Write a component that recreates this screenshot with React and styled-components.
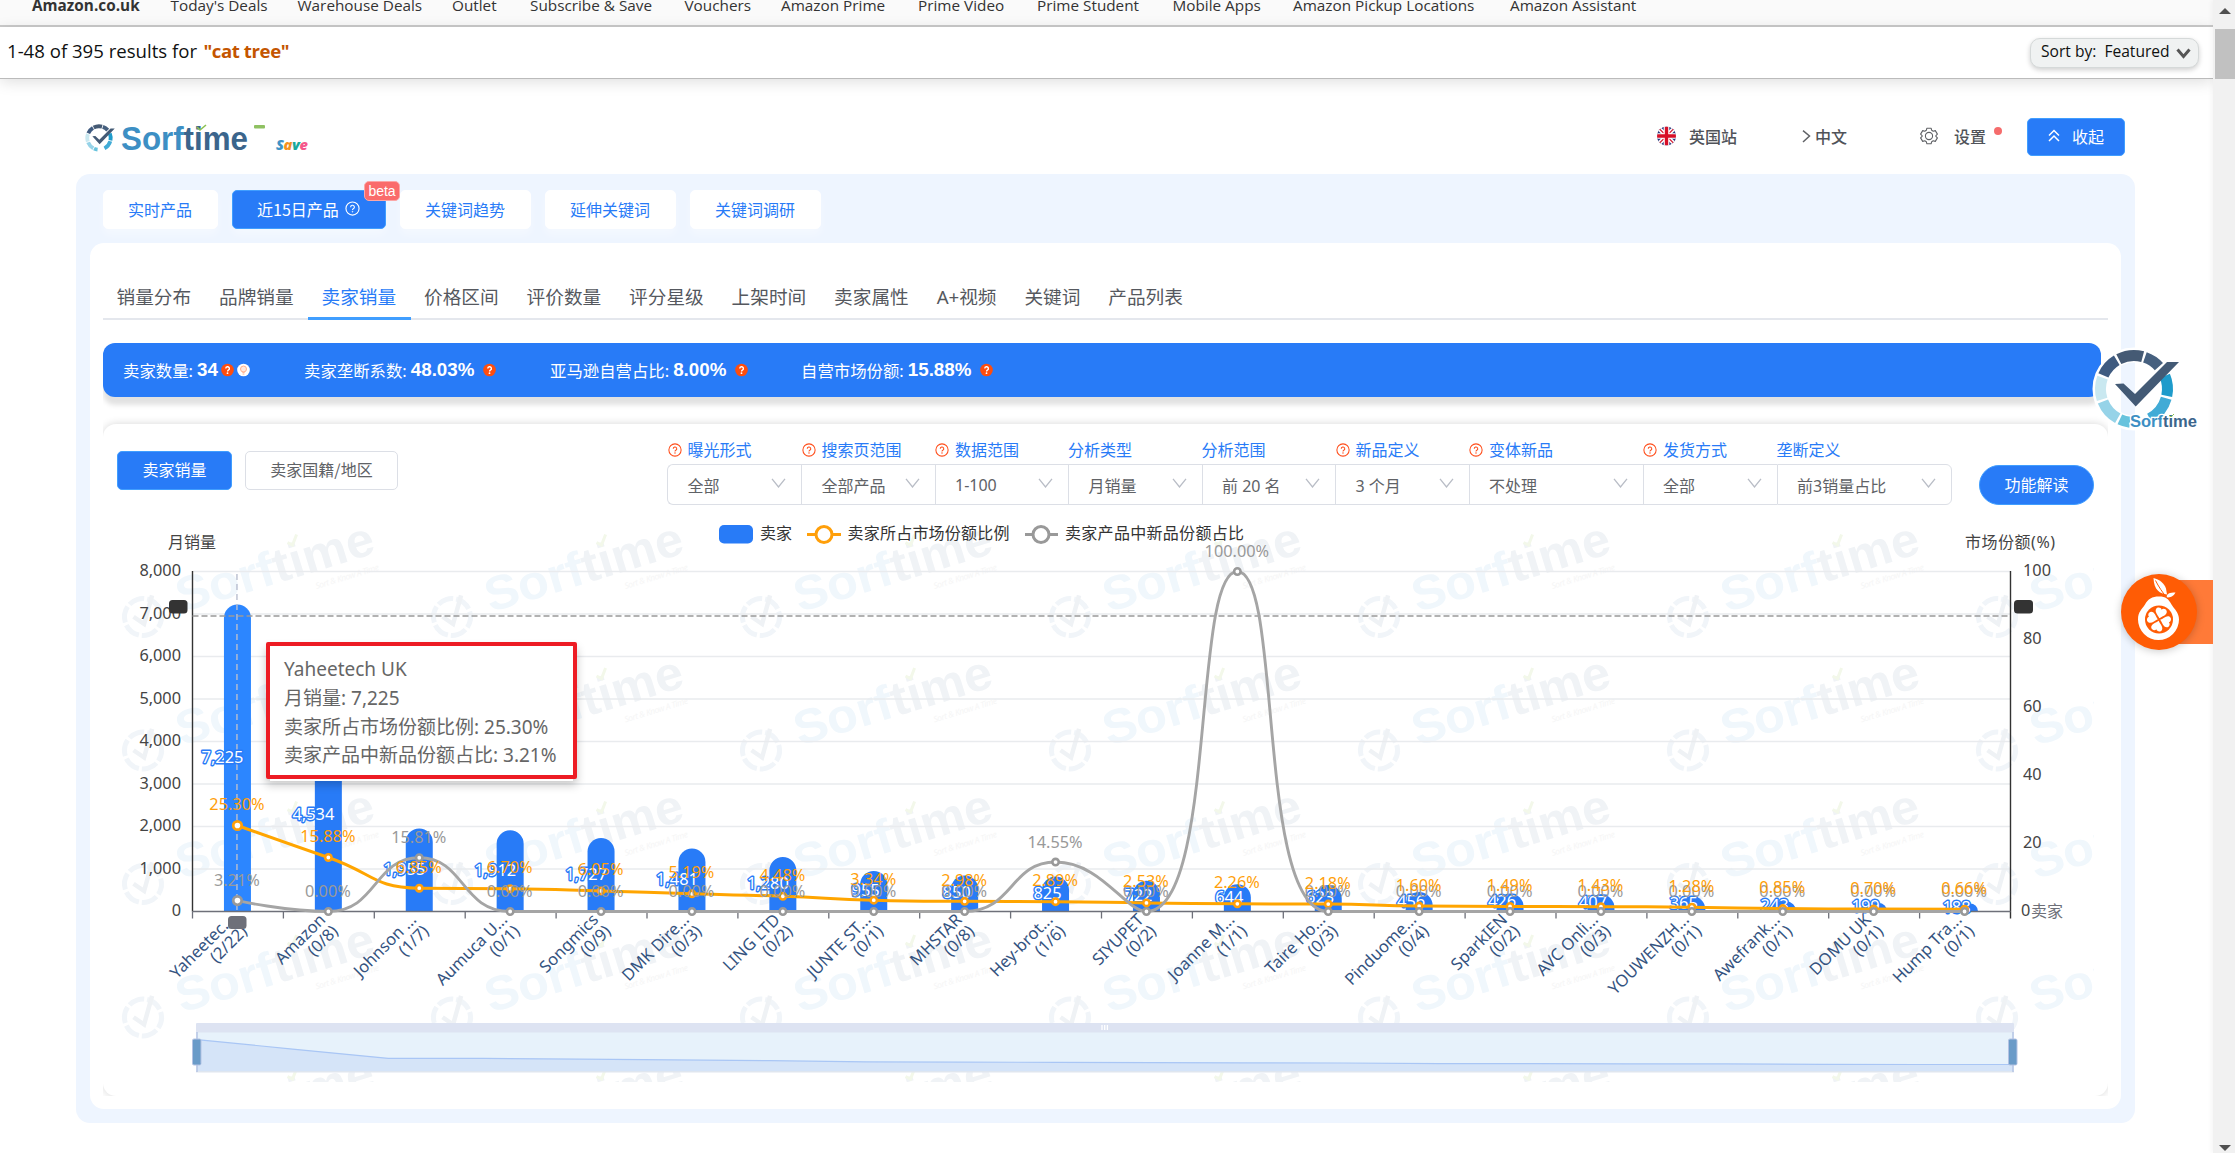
import React from "react";
import styled, { createGlobalStyle, css } from "styled-components";

const BLUE = "#287bf7";
const ORANGE = "#ffa500";

const GlobalStyle = createGlobalStyle`
  * { box-sizing: border-box; }
  body {
    margin: 0;
    background: #fff;
    color: #606266;
    font-family: "Noto Sans", "Noto Sans CJK SC", sans-serif;
    font-size: 16px;
    overflow: hidden;
  }
`;

/* ---------- page frame ---------- */

const Page = styled.div`
  position: relative;
  display: grid;
  grid-template-columns: 2213px 22px;
  width: 2235px;
  height: 1153px;
  overflow: hidden;
`;

const Main = styled.main`
  display: flex;
  flex-direction: column;
  min-width: 0;
`;

const ScrollTrack = styled.aside`
  display: flex;
  flex-direction: column;
  align-items: center;
  padding: 8px 0 2px 2px;
  background: #f1f1f1;
  box-shadow: -2px 0 4px rgba(0, 0, 0, 0.04);
`;

const Arrow = styled.i`
  border: 6px solid transparent;
  border-top-width: ${(p) => (p.$down ? "6px" : "0")};
  border-bottom-width: ${(p) => (p.$down ? "0" : "6px")};
  ${(p) => (p.$down ? "border-top-color" : "border-bottom-color")}: #505050;
  margin-top: ${(p) => (p.$down ? "auto" : "0")};
`;

const ScrollThumb = styled.div`
  width: 20px;
  height: 50px;
  margin-top: 15px;
  background: #c1c1c1;
`;

/* ---------- store navigation ---------- */

const TopNav = styled.nav`
  display: flex;
  gap: 30px;
  height: 27px;
  padding-left: 32px;
  background: #fafafa;
  border-bottom: 2px solid #cbcbcb;
  overflow: hidden;
`;

const NavItem = styled.a`
  flex: none;
  width: ${(p) => p.$w}px;
  margin-top: -6.5px;
  color: #333;
  font-family: "Open Sans", sans-serif;
  font-size: 15.3px;
  line-height: 22px;
  white-space: nowrap;
  ${(p) =>
    p.$bold &&
    css`
      font-weight: 700;
      letter-spacing: 0.02px;
    `}
`;

const ResultBar = styled.div`
  display: flex;
  flex: none;
  justify-content: space-between;
  height: 52px;
  padding: 11px 14px 0 7px;
  border-bottom: 1px solid #bbb;
  box-shadow: 0 3px 14px rgba(0, 0, 0, 0.13);
`;

const ResultText = styled.div`
  color: #0f1111;
  font-family: "Open Sans", sans-serif;
  font-size: 18.6px;
  line-height: 28px;
  margin-top: -1px;
  white-space: nowrap;
  b {
    color: #c45500;
    font-weight: 700;
    letter-spacing: -0.4px;
    margin-left: 1.5px;
  }
`;

const SortSelect = styled.button`
  display: flex;
  align-items: center;
  gap: 8px;
  width: 169px;
  height: 30px;
  padding: 0 7px 4px 10px;
  border: 1px solid #d5d9d9;
  border-radius: 10px;
  background: #f0f2f2;
  box-shadow: 0 2px 5px rgba(15, 17, 17, 0.2);
  color: #0f1111;
  font-family: "Open Sans", sans-serif;
  font-size: 15.6px;
  white-space: nowrap;
  svg {
    flex: none;
    margin: 4px 0 0 -2px;
  }
`;

/* ---------- plugin header ---------- */

const PluginHeader = styled.header`
  display: flex;
  align-items: center;
  justify-content: space-between;
  height: 95px;
  padding: 21px 88px 0 85px;
`;

const Tools = styled.div`
  display: flex;
  align-items: center;
  height: 38px;
  color: #505359;
  font-family: "Noto Sans CJK SC", sans-serif;
  font-weight: 500;
  svg { flex: none; }
`;

const Tool = styled.div`
  display: flex;
  align-items: center;
  gap: ${(p) => p.$gap}px;
  margin-right: ${(p) => p.$after}px;
  padding-bottom: 2px;
  white-space: nowrap;
`;

const Dot = styled.i`
  align-self: flex-start;
  width: 8px;
  height: 8px;
  margin: 9px 0 0 -8px;
  border-radius: 50%;
  background: #f56c6c;
`;

const PrimaryButton = styled.button`
  display: flex;
  align-items: center;
  justify-content: center;
  gap: ${(p) => p.$gap || 0}px;
  flex: none;
  width: ${(p) => p.$w}px;
  height: ${(p) => p.$h}px;
  padding: 0 0 3px;
  border: 1px solid ${(p) => (p.$plain ? "#dcdfe6" : "#409eff")};
  border-radius: ${(p) => (p.$round ? "20px" : "5px")};
  background: ${(p) => (p.$plain ? "#fff" : BLUE)};
  color: ${(p) => (p.$plain ? "#606266" : "#fff")};
  font-family: "Noto Sans CJK SC", sans-serif;
  font-size: 16px;
  white-space: nowrap;
`;

/* ---------- panels ---------- */

const BluePanel = styled.section`
  display: flex;
  flex-direction: column;
  width: 2059px;
  height: 949px;
  margin-left: 76px;
  padding: 16px 14px 14px;
  border-radius: 14px;
  background: #eef5ff;
`;

const TabRow = styled.div`
  display: flex;
  gap: 14px;
  height: 53px;
  padding-left: 13px;
`;

const Tab = styled.button`
  position: relative;
  display: flex;
  align-items: center;
  justify-content: center;
  gap: 6px;
  width: ${(p) => p.$w}px;
  height: 39px;
  padding: 0 1px 2px 0;
  border: 1px solid ${(p) => (p.$active ? "#409eff" : "#fff")};
  border-radius: 5px;
  background: ${(p) => (p.$active ? BLUE : "#fff")};
  box-shadow: 0 6px 8px rgba(255, 255, 255, 0.35);
  color: ${(p) => (p.$active ? "#fff" : BLUE)};
  font-family: "Noto Sans CJK SC", sans-serif;
  font-size: 16px;
  white-space: nowrap;
`;

const Badge = styled.span`
  position: absolute;
  z-index: 1;
  top: -10px;
  right: -15px;
  width: 36px;
  height: 20px;
  border: 1px solid #fba7a7;
  border-radius: 5px;
  background: #fa6b6b;
  color: #fff;
  font: 14px/18px "Liberation Sans", sans-serif;
  text-align: center;
`;

const WhitePanel = styled.div`
  display: flex;
  flex-direction: column;
  height: 866px;
  padding: 35px 13px 13px;
  border-radius: 14px;
  background: #fff;
`;

const SubTabs = styled.div`
  display: flex;
  width: 2005px;
  height: 42px;
  border-bottom: 2px solid #e4e7ed;
`;

const SubTab = styled.a`
  flex: none;
  height: 42px;
  padding: 0 14.4px 0 13.5px;
  border-bottom: 3px solid ${(p) => (p.$active ? "#409eff" : "transparent")};
  color: ${(p) => (p.$active ? BLUE : "#55585e")};
  font-size: 18.67px;
  line-height: 37px;
  white-space: nowrap;
`;

const StatsBar = styled.div`
  display: flex;
  align-items: center;
  width: 1998px;
  height: 54px;
  margin-top: 23px;
  padding: 0 0 1px 20px;
  border-radius: 12px;
  background: ${BLUE};
  box-shadow: 0 8px 5px #e2e2e2;
  clip-path: inset(0 0 -14px 0);
  color: #fff;
`;

const Stat = styled.div`
  display: flex;
  align-items: center;
  gap: 4px;
  flex: none;
  width: ${(p) => p.$w}px;
  white-space: nowrap;
  font-size: 16.4px;
  b {
    font: 700 18.8px "Liberation Sans", sans-serif;
    margin-right: ${(p) => (p.$tight ? "-1px" : "5px")};
  }
  svg { margin-right: -1px; }
`;

const Card = styled.div`
  display: flex;
  flex-direction: column;
  width: 2005px;
  height: 672px;
  margin-top: 27px;
  padding: 0 14px;
  border-radius: 13px;
  box-shadow: 0 0 9px rgba(0, 0, 0, 0.16);
  clip-path: inset(-8px 0 0 0);
`;

const CardHead = styled.div`
  display: flex;
  align-items: flex-end;
  height: 81px;
`;

const Modes = styled.div`
  display: flex;
  gap: 13px;
  margin: 0 269px 15px 0;
`;

const Filters = styled.div`
  display: flex;
  margin-right: 27px;
`;

const Filter = styled.div`
  display: flex;
  flex-direction: column;
  width: ${(p) => p.$w}px;
`;

const FilterLabel = styled.div`
  display: flex;
  align-items: center;
  gap: 6px;
  height: 26px;
  padding-bottom: 4px;
  color: ${BLUE};
  white-space: nowrap;
  svg { margin: 2px 0 0 0.5px; }
`;

const FilterBox = styled.div`
  display: flex;
  align-items: center;
  justify-content: space-between;
  height: 41px;
  padding: 0 15px 0 19.5px;
  border: 1px solid #dcdfe6;
  border-right-width: ${(p) => (p.$last ? "1px" : "0")};
  border-radius: ${(p) => (p.$first ? "6px 0 0 6px" : p.$last ? "0 6px 6px 0" : "0")};
  color: #606266;
  white-space: nowrap;
  svg { margin-top: -3px; }
`;

/* ---------- icons ---------- */

const Question = ({ size = 16, color = "#ff4d1a" }) => (
  <svg width={size} height={size} viewBox="0 0 16 16" fill="none" stroke={color}>
    <circle cx="8" cy="8" r="7" strokeWidth="1.2" />
    <path d="M6 6.6a2 2 0 1 1 2.9 1.7c-.7.4-.9.7-.9 1.3" strokeWidth="1.2" />
    <circle cx="8" cy="11.4" r=".5" strokeWidth=".6" fill={color} />
  </svg>
);

const HelpSolid = () => (
  <svg width="13" height="14" viewBox="0 0 13 14">
    <circle cx="6.5" cy="7" r="6.3" fill="#ff4d0d" />
    <path d="M4.8 5.6a1.8 1.8 0 1 1 2.6 1.6c-.7.4-.8.6-.8 1.2" fill="none" stroke="#fff" strokeWidth="1.4" />
    <circle cx="6.5" cy="10.2" r=".9" fill="#fff" />
  </svg>
);

const Bulb = () => (
  <svg width="13" height="14" viewBox="0 0 13 14">
    <circle cx="6.5" cy="7" r="6.3" fill="#fff" />
    <circle cx="6.5" cy="6" r="3" fill="#ffe9df" stroke="#ffb08c" />
    <path d="M5.3 9.3h2.4M5.6 11h1.8" stroke="#ffb08c" />
  </svg>
);

const Chevron = () => (
  <svg width="15" height="10" viewBox="0 0 15 10" fill="none" stroke="#b9bdc6" strokeWidth="1.3">
    <path d="M1 .8 7.5 9 14 .8" />
  </svg>
);

const UkFlag = () => (
  <svg width="19" height="20" viewBox="0 0 20 20">
    <clipPath id="flagClip">
      <circle cx="10" cy="10" r="10" />
    </clipPath>
    <g clipPath="url(#flagClip)">
      <rect width="20" height="20" fill="#27337a" />
      <path d="M0 0 20 20M20 0 0 20" stroke="#fff" strokeWidth="4.5" />
      <path d="M0 0 20 20M20 0 0 20" stroke="#d4142a" strokeWidth="1.2" />
      <path d="M10 0V20M0 10H20" stroke="#fff" strokeWidth="6" />
      <path d="M10 0V20M0 10H20" stroke="#d80f27" strokeWidth="3.6" />
    </g>
  </svg>
);

const Gear = () => (
  <svg width="18" height="18" viewBox="0 0 18 18" fill="none" stroke="#606266" strokeWidth="1.1">
    <path
      d="M6.9 1.200h4.200l.6 2.100 1.500.9 2.100-.6 2.100 3.500-1.500 1.500v.8l1.500 1.500-2.100 3.500-2.100-.6-1.500.9-.6 2.100H6.900l-.6-2.100-1.500-.9-2.100.6L.6 10.900l1.500-1.500v-.8L.6 7.100l2.100-3.500 2.100.6 1.500-.9z"
      strokeLinejoin="round"
    />
    <circle cx="9" cy="9" r="3.600" />
  </svg>
);

const RING = [
  [-66, -31, "#3f5b80"],
  [-27, 15, "#455a74"],
  [19, 48, "#46607f"],
  [67, 102, "#1e9bcb"],
  [106, 152, "#41abd6"],
  [187, 205, "#68c3dd"],
  [209, 248, "#96d3e8"],
  [252, 290, "#c9e8f0"],
];

const polar = (r, deg) => {
  const a = ((deg - 90) * Math.PI) / 180;
  return `${(r * Math.cos(a)).toFixed(2)} ${(r * Math.sin(a)).toFixed(2)}`;
};

const CheckRing = () => (
  <g>
    {RING.map(([a, b, c]) => (
      <path key={a} d={`M${polar(33.5, a)}A33.5 33.5 0 0 1 ${polar(33.5, b)}`} stroke={c} strokeWidth="11" fill="none" />
    ))}
    <path d="M-19-5-10.500-5.500 1 5 33-27 45-27 1.700 17.500z" fill="#435a75" />
  </g>
);

const HeaderLogo = () => (
  <svg width="230" height="36" viewBox="85 119 230 36">
    <g transform="translate(99 138) scale(.35)">
      <CheckRing />
    </g>
    <text x="121" y="150" fontFamily="Liberation Sans, sans-serif" fontWeight="700" fontSize="33" textLength="127" lengthAdjust="spacingAndGlyphs">
      <tspan fill="#3d8fc4">Sorf</tspan>
      <tspan fill="#3b658c">time</tspan>
    </text>
    <path d="M197 127l3 3 6-5" stroke="#8cc152" strokeWidth="1.600" fill="none" />
    <rect x="254" y="125" width="11" height="3.500" rx="1" fill="#8fc162" />
    <text x="276" y="150" fontFamily="Open Sans, sans-serif" fontWeight="800" fontStyle="italic" fontSize="14.500" textLength="32">
      <tspan fill="#3f93c6">S</tspan>
      <tspan fill="#f5921e">a</tspan>
      <tspan fill="#1aa99c">v</tspan>
      <tspan fill="#f5588b">e</tspan>
    </text>
  </svg>
);

/* ---------- chart ---------- */

const SELLERS = [
  ["Yaheetec...", "2/22", 7225, 25.3, 3.21],
  ["Amazon", "0/8", 4534, 15.88, 0],
  ["Johnson ...", "1/7", 1955, 6.85, 15.81],
  ["Aumuca U...", "0/1", 1912, 6.7, 0],
  ["Songmics", "0/9", 1727, 6.05, 0],
  ["DMK Dire...", "0/3", 1481, 5.19, 0],
  ["LING LTD", "0/2", 1280, 4.48, 0],
  ["JUNTE ST...", "0/1", 955, 3.34, 0],
  ["MHSTAR", "0/8", 850, 2.98, 0],
  ["Hey-brot...", "1/6", 825, 2.89, 14.55],
  ["SIYUPET", "0/2", 722, 2.53, 0],
  ["Joanne M...", "1/1", 644, 2.26, 100],
  ["Taire Ho...", "0/3", 623, 2.18, 0],
  ["Pinduome...", "0/4", 456, 1.6, 0],
  ["SparkIEN", "0/2", 426, 1.49, 0],
  ["AVC Onli...", "0/3", 407, 1.43, 0],
  ["YOUWENZH...", "0/1", 365, 1.28, 0],
  ["Awefrank...", "0/1", 243, 0.85, 0],
  ["DOMU UK", "0/1", 199, 0.7, 0],
  ["Hump Tra...", "0/1", 188, 0.66, 0],
];

const LEFT = 192.5;
const RIGHT = 2010.5;
const BASE = 911.5;
const PLOT_H = 340;
const STEP = (RIGHT - LEFT) / SELLERS.length;
const cx = (i) => LEFT + STEP * (i + 0.5) - 0.5;
const ySales = (v) => BASE - (v / 8000) * PLOT_H;
const yShare = (v) => BASE - (v / 100) * PLOT_H;

const clamp = (v, a, b) => Math.max(Math.min(v, Math.max(a, b)), Math.min(a, b));

// Smooth curve whose control points never leave the span between neighbouring points.
function smoothPath(pts) {
  let d = `M${pts[0][0]} ${pts[0][1]}`;
  let c0 = pts[0];
  for (let i = 1; i < pts.length; i++) {
    const p = pts[i - 1];
    const c = pts[i];
    const n = pts[i + 1];
    let c1 = c;
    let next = c;
    if (n) {
      const lp = Math.hypot(c[0] - p[0], c[1] - p[1]);
      const ln = Math.hypot(n[0] - c[0], n[1] - c[1]);
      const ratio = ln / (ln + lp);
      next = [0, 1].map((k) => clamp(c[k] + (n[k] - p[k]) * 0.5 * ratio, n[k], c[k]));
      c1 = [0, 1].map((k) => clamp(c[k] - ((next[k] - c[k]) * lp) / ln, p[k], c[k]));
      next = [0, 1].map((k) => c[k] + ((c[k] - c1[k]) * ln) / lp);
    }
    d += `C${c0[0]} ${c0[1]} ${c1[0]} ${c1[1]} ${c[0]} ${c[1]}`;
    c0 = next;
  }
  return d;
}

const barPath = (x, y) => {
  const w = 27;
  const h = BASE - y;
  const r = Math.min(13.5, h);
  const l = x - w / 2;
  return `M${l} ${BASE}V${y + r}A${r} ${r} 0 0 1 ${l + r} ${y}H${l + w - r}A${r} ${r} 0 0 1 ${l + w} ${y + r}V${BASE}Z`;
};

const ChartSvg = styled.svg`
  display: block;
  flex: none;
  width: 1977px;
  height: 577px;
  font-family: "Noto Sans", "Noto Sans CJK SC", sans-serif;
  font-size: 16px;
  text { white-space: pre; }
`;

const Watermarks = () => {
  const marks = [];
  for (let r = 0; r < 5; r++) {
    for (let c = 0; c < 7; c++) {
      marks.push(
        <g key={`${r}-${c}`} transform={`translate(${143 + c * 309} ${617 + r * 133.5}) rotate(-17)`}>
          <circle r="18.500" fill="none" stroke="#f1f5f9" strokeWidth="5" strokeDasharray="11 2" pathLength="78" />
          <path d="M-9-3-1 7 15-18" fill="none" stroke="#eff2f5" strokeWidth="4.500" />
          <text x="38" y="7" fontFamily="Liberation Sans, sans-serif" fontWeight="700" fontSize="48" textLength="205" lengthAdjust="spacingAndGlyphs">
            <tspan fill="#f0f7fc">Sorf</tspan>
            <tspan fill="#f0f3f6">time</tspan>
          </text>
          <path d="M160-29l4 4 7-9" stroke="#f3f8ea" strokeWidth="3" fill="none" />
          <text x="174" y="24" fontSize="8.500" fontStyle="italic" fill="#f6f6f6" textLength="66">Sort &amp; Know A Time</text>
        </g>
      );
    }
  }
  return <g>{marks}</g>;
};

const Legend = () => (
  <g fill="#333" fontFamily="Noto Sans CJK SC, sans-serif">
    <rect x="719" y="525" width="34" height="18.500" rx="5" fill={BLUE} />
    <text x="760" y="538.500">卖家</text>
    <path d="M807 534.500H841" stroke="#ff9f0a" strokeWidth="3" />
    <circle cx="824" cy="534.500" r="8" fill="#fff" stroke="#ff9f0a" strokeWidth="3" />
    <text x="847.500" y="538.500" textLength="162">卖家所占市场份额比例</text>
    <path d="M1025 534.500H1058" stroke="#999" strokeWidth="3" />
    <circle cx="1041" cy="534.500" r="8" fill="#fff" stroke="#999" strokeWidth="3" />
    <text x="1065" y="538.500" textLength="179">卖家产品中新品份额占比</text>
  </g>
);

const Slider = () => {
  const sx = (i) => 197 + (1816 / 19) * i;
  const sy = (v) => 1065.2 - v * 0.00355;
  const line = SELLERS.map((s, i) => `${sx(i).toFixed(1)} ${sy(s[2]).toFixed(1)}`).join("L");
  return (
    <g>
      <rect x="196" y="1032" width="1818" height="40" fill="#e7f2fb" />
      <path d={`M197 1071.500L${line}V1071.500Z`} fill="#d5e4f8" />
      <path d={`M${line}`} fill="none" stroke="#a9c6f5" strokeWidth="1.200" />
      <path d="M196 1071.700H2014" stroke="#dfe6ef" strokeWidth="1.500" />
      <rect x="196" y="1023" width="1818" height="9.500" rx="1" fill="#dde3f2" />
      <path d="M1102 1025V1030M1104.700 1025V1030M1107.400 1025V1030" stroke="#fff" strokeWidth="1.300" />
      <path d="M197 1032V1072M2013 1032V1072" stroke="#b3c2e3" strokeWidth="1.400" />
      {[192.5, 2008.5].map((x) => (
        <rect key={x} x={x} y="1039" width="8.500" height="26" rx="1.500" fill="#6a9bc8" stroke="#b3c2e3" />
      ))}
    </g>
  );
};

const Chart = () => {
  const share = SELLERS.map((s, i) => [cx(i), yShare(s[3])]);
  const fresh = SELLERS.map((s, i) => [cx(i), yShare(s[4])]);
  return (
    <ChartSvg viewBox="117 505 1977 577">
      <Watermarks />
      <Legend />

      {[1, 2, 3, 4, 5, 6, 7, 8].map((k) => (
        <path key={k} d={`M${LEFT} ${ySales(k * 1000)}H${RIGHT}`} stroke="#e9ebee" strokeWidth="1.300" />
      ))}
      <g fill="#444" textAnchor="end">
        {[0, 1, 2, 3, 4, 5, 6, 7, 8].map((k) => (
          <text key={k} x="181" y={ySales(k * 1000) + 4.5} fontSize="16.300">
            {(k * 1000).toLocaleString("en-US")}
          </text>
        ))}
      </g>
      <g fill="#444">
        {[0, 20, 40, 60, 80, 100].map((k) => (
          <text key={k} x={k ? 2023 : 2021} y={yShare(k) + 4.5} fontSize="16.300">{k}</text>
        ))}
        <text x="168" y="548">月销量</text>
        <text x="1965" y="548" textLength="90">市场份额(%)</text>
      </g>
      <text x="2031" y="916.500" fill="#6e7079">卖家</text>

      {SELLERS.map((s, i) => (
        <path key={s[0]} d={barPath(cx(i), ySales(s[2]))} fill={i ? BLUE : "#2c86ff"} />
      ))}

      <path d={`M${LEFT} 571V${BASE}M${RIGHT} 571V${BASE + 7}`} stroke="#333" strokeWidth="1.400" />
      <path
        d={`M${LEFT} ${BASE}H${RIGHT}` + Array.from({ length: 20 }, (_, i) => `M${LEFT + STEP * i} ${BASE}v7`).join("")}
        stroke="#6e7079"
        strokeWidth="1.300"
      />
      <path d={`M${LEFT} 616H${RIGHT}`} stroke="#999" strokeWidth="1.700" strokeDasharray="6 3" />
      <path d={`M${cx(0) - 0.5} 574V${BASE}`} stroke="#b9bfd0" strokeWidth="1.400" strokeDasharray="6 4" />

      <g textAnchor="end" fill="#fff" stroke={BLUE} strokeWidth="2.800" strokeLinejoin="round" paintOrder="stroke">
        {SELLERS.map((s, i) => (
          <text key={s[0]} x={cx(i) + 6} y={(BASE + ySales(s[2])) / 2 + 5} fontSize="16.400">
            {s[2].toLocaleString("en-US")}
          </text>
        ))}
      </g>

      <path d={smoothPath(share)} fill="none" stroke={ORANGE} strokeWidth="3" />
      <path d={smoothPath(fresh)} fill="none" stroke="#a5a5a5" strokeWidth="2.900" />
      {share.map(([x, y], i) => (
        <circle key={x} cx={x} cy={y} r={i ? 3.2 : 4.2} fill="#fff" stroke="#ff9f0a" strokeWidth={i ? 2.6 : 2.8} />
      ))}
      {fresh.map(([x, y], i) => (
        <circle key={x} cx={x} cy={y} r={i ? 3.2 : 4.2} fill="#fff" stroke="#999" strokeWidth={i ? 2.6 : 2.8} />
      ))}

      <g textAnchor="middle" fill="#999" fontSize="16.300">
        {fresh.map(([x, y], i) => (
          <text key={x} x={x - 0.5} y={y - 14.5}>{SELLERS[i][4].toFixed(2)}%</text>
        ))}
      </g>
      <g textAnchor="middle" fill="#ff9f0a" fontSize="16.300">
        {share.map(([x, y], i) => (
          <text key={x} x={x - 0.5} y={y - 15.5}>{SELLERS[i][3].toFixed(2)}%</text>
        ))}
      </g>

      <g textAnchor="end" fill="#34537f" fontSize="16.500">
        {SELLERS.map((s, i) => (
          <g key={s[0]} transform={`translate(${cx(i)} 917.500) rotate(-45)`}>
            <text x="-3.500" y="1">{s[0]}</text>
            <text x="-3" y="18">({s[1]})</text>
          </g>
        ))}
      </g>

      <rect x="169" y="600" width="18.500" height="13.500" rx="3.500" fill="#333" />
      <rect x="2014" y="600" width="19" height="13.500" rx="3.500" fill="#333" />
      <rect x="228" y="916" width="18.500" height="13" rx="3.500" fill="#6e7079" />
      <Slider />
    </ChartSvg>
  );
};

/* ---------- floating parts ---------- */

const Tooltip = styled.div`
  position: absolute;
  top: 642px;
  left: 266px;
  width: 311px;
  height: 137px;
  padding: 9px 14px;
  border: 4px solid #ed1c24;
  border-radius: 2px;
  background: #fff;
  box-shadow: 0 6px 0 -4px #fff, 0 6px 10px rgba(0, 0, 0, 0.22);
  color: #666;
  font-size: 19px;
  line-height: 28.8px;
  white-space: nowrap;
`;

const FloatLogo = styled.svg`
  position: absolute;
  top: 340px;
  left: 2085px;
`;

const FruitWidget = styled.div`
  position: absolute;
  top: 573px;
  left: 2121px;
  display: flex;
  align-items: center;
  width: 92px;
  height: 77px;
  background: linear-gradient(#ff7a38, #ff7a38) right center / 50px 64px no-repeat;
`;

const FruitDisc = styled.div`
  width: 76px;
  height: 76px;
  border-radius: 50%;
  background: #ff5c05;
  box-shadow: 0 1px 8px rgba(0, 0, 0, 0.22);
`;

const Petal = ({ turn }) => (
  <path
    transform={`translate(2159.500 619) rotate(${turn})`}
    d="M0-1.200C-2-4-6.500-6-5.500-9.600c.8-2.600 4.500-2.600 5.500-.6 1-2 4.700-2 5.500.6C6.500-6 2-4 0-1.200z"
    fill="#fff"
  />
);

const Fruit = () => (
  <FruitDisc>
    <svg width="76" height="76" viewBox="2121.500 573.500 76 76">
      <path d="M2159.500 596c7 0 9.500 2.500 12.500 8 3 5 7.500 8 7.500 15a20.500 20.500 0 0 1-41 0c0-8 4-10 7-15 3-5.500 7-8 14-8z" fill="#fff" />
      <circle cx="2159.500" cy="619" r="14" fill="#ff5c05" />
      <Petal turn={15} />
      <Petal turn={105} />
      <Petal turn={195} />
      <Petal turn={285} />
      <path d="M2154 577.500c6 1.500 10.500 5 12.500 10.500l1 6c-7-1-13-4-13.500-16.500z" fill="#fff" />
      <path d="M2167 597c0-4 3-5 9-5-2 4-5 5-9 5z" fill="#fff" />
      <path d="M2156 580c3 6 7 12 12 18" stroke="#ff5c05" strokeWidth="1" fill="none" />
    </svg>
  </FruitDisc>
);

/* ---------- data for the controls ---------- */

const NAV = [
  ["Amazon.co.uk", 108.5],
  ["Today's Deals", 97],
  ["Warehouse Deals", 124.5],
  ["Outlet", 48],
  ["Subscribe & Save", 124.5],
  ["Vouchers", 66.5],
  ["Amazon Prime", 107],
  ["Prime Video", 89],
  ["Prime Student", 105.5],
  ["Mobile Apps", 90.5],
  ["Amazon Pickup Locations", 187],
  ["Amazon Assistant", 130],
];

const SUBTABS = ["销量分布", "品牌销量", "卖家销量", "价格区间", "评价数量", "评分星级", "上架时间", "卖家属性", "A+视频", "关键词", "产品列表"];

const FILTERS = [
  ["曝光形式", "全部", 134, true],
  ["搜索页范围", "全部产品", 133.5, true],
  ["数据范围", "1-100", 133.5, true],
  ["分析类型", "月销量", 133.5, false],
  ["分析范围", "前 20 名", 133.5, false],
  ["新品定义", "3 个月", 133.5, true],
  ["变体新品", "不处理", 174, true],
  ["发货方式", "全部", 134, true],
  ["垄断定义", "前3销量占比", 175.5, false],
];

export default function App() {
  return (
    <Page>
      <GlobalStyle />
      <Main>
        <TopNav>
          {NAV.map(([t, w], i) => (
            <NavItem key={t} $w={w} $bold={i === 0}>{t}</NavItem>
          ))}
        </TopNav>
        <ResultBar>
          <ResultText>
            1-48 of 395 results for <b>"cat tree"</b>
          </ResultText>
          <SortSelect>
            <span>Sort by:</span>
            <span>Featured</span>
            <svg width="15" height="11" viewBox="0 0 15 11" fill="none" stroke="#555" strokeWidth="3">
              <path d="M1.500 1.500 7.500 8.500 13.500 1.500" />
            </svg>
          </SortSelect>
        </ResultBar>

        <PluginHeader>
          <HeaderLogo />
          <Tools>
            <Tool $gap={13} $after={65}>
              <UkFlag />
              英国站
            </Tool>
            <Tool $gap={4} $after={73}>
              <svg width="9" height="13" viewBox="0 0 9 13" fill="none" stroke="#606266" strokeWidth="1.500">
                <path d="M1 .7 7.500 6 1 12" />
              </svg>
              中文
            </Tool>
            <Tool $gap={16} $after={16}>
              <Gear />
              设置
            </Tool>
            <Dot />
            <Tool $gap={0} $after={25} />
            <PrimaryButton $w={98} $h={38} $gap={12}>
              <svg width="12" height="13" viewBox="0 0 12 13" fill="none" stroke="#fff" strokeWidth="1.500">
                <path d="M1 6.500 6 1.500 11 6.500M1 12 6 7 11 12" />
              </svg>
              收起
            </PrimaryButton>
          </Tools>
        </PluginHeader>

        <BluePanel>
          <TabRow>
            <Tab $w={115}>实时产品</Tab>
            <Tab $w={154} $active>
              近15日产品
              <Question size={15} color="#fff" />
              <Badge>beta</Badge>
            </Tab>
            <Tab $w={131}>关键词趋势</Tab>
            <Tab $w={131}>延伸关键词</Tab>
            <Tab $w={131}>关键词调研</Tab>
          </TabRow>
          <WhitePanel>
            <SubTabs>
              {SUBTABS.map((t, i) => (
                <SubTab key={t} $active={i === 2}>{t}</SubTab>
              ))}
            </SubTabs>
            <StatsBar>
              <Stat $w={181} $tight>
                <span>卖家数量:</span>
                <b>34</b>
                <HelpSolid />
                <Bulb />
              </Stat>
              <Stat $w={246}>
                <span>卖家垄断系数:</span>
                <b>48.03%</b>
                <HelpSolid />
              </Stat>
              <Stat $w={251}>
                <span>亚马逊自营占比:</span>
                <b>8.00%</b>
                <HelpSolid />
              </Stat>
              <Stat $w={250}>
                <span>自营市场份额:</span>
                <b>15.88%</b>
                <HelpSolid />
              </Stat>
            </StatsBar>
            <Card>
              <CardHead>
                <Modes>
                  <PrimaryButton $w={115} $h={39}>卖家销量</PrimaryButton>
                  <PrimaryButton $w={153} $h={39} $plain>卖家国籍/地区</PrimaryButton>
                </Modes>
                <Filters>
                  {FILTERS.map(([label, value, w, help], i) => (
                    <Filter key={label} $w={w}>
                      <FilterLabel>
                        {help && <Question size={14} />}
                        {label}
                      </FilterLabel>
                      <FilterBox $first={i === 0} $last={i === FILTERS.length - 1}>
                        {value}
                        <Chevron />
                      </FilterBox>
                    </Filter>
                  ))}
                </Filters>
                <PrimaryButton $w={115} $h={40} $round>功能解读</PrimaryButton>
              </CardHead>
              <Chart />
            </Card>
          </WhitePanel>
        </BluePanel>
      </Main>

      <ScrollTrack>
        <Arrow />
        <ScrollThumb />
        <Arrow $down />
      </ScrollTrack>

      <Tooltip>
        <div>Yaheetech UK</div>
        <div>月销量: 7,225</div>
        <div>卖家所占市场份额比例: 25.30%</div>
        <div>卖家产品中新品份额占比: 3.21%</div>
      </Tooltip>

      <FloatLogo width="120" height="100" viewBox="2085 340 120 100">
        <circle cx="2134" cy="389" r="34" fill="none" stroke="#fff" strokeWidth="15" />
        <g transform="translate(2134 389)">
          <CheckRing />
        </g>
        <text x="2130" y="427" fontFamily="Liberation Sans, sans-serif" fontWeight="700" fontSize="16" textLength="67" lengthAdjust="spacingAndGlyphs" stroke="#fff" strokeWidth="2.500" paintOrder="stroke">
          <tspan fill="#3d8fc4">Sorf</tspan>
          <tspan fill="#3b658c">time</tspan>
        </text>
        <path d="M2169 415l2 2 3-3" stroke="#8cc152" fill="none" />
      </FloatLogo>

      <FruitWidget>
        <Fruit />
      </FruitWidget>
    </Page>
  );
}
